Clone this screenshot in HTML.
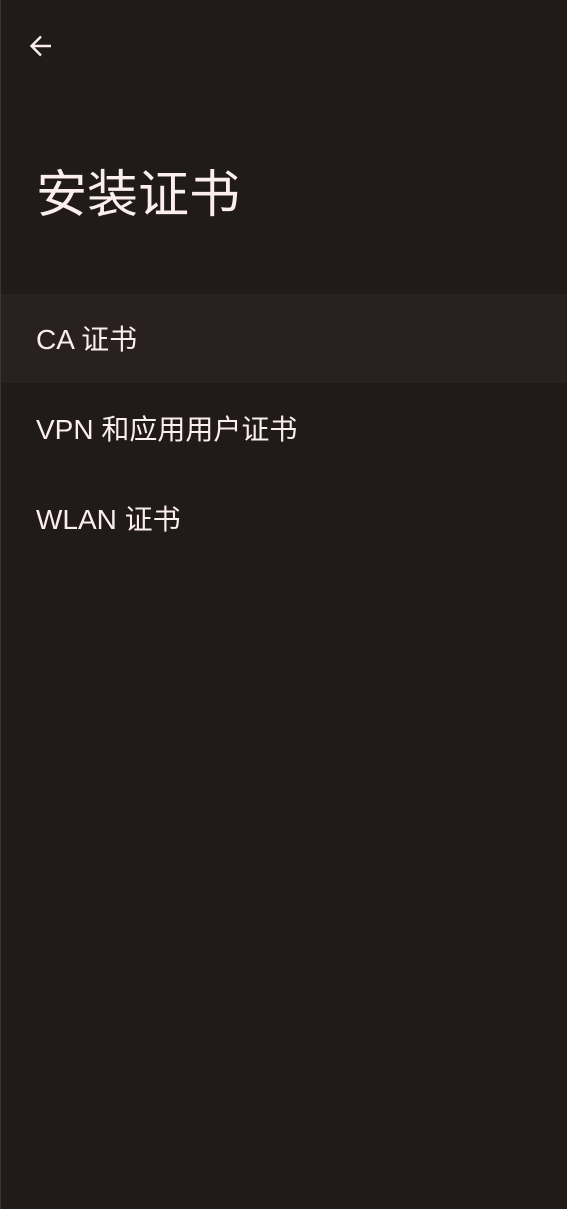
<!DOCTYPE html>
<html><head><meta charset="utf-8"><style>
html,body{margin:0;padding:0;}
body{width:567px;height:1209px;background:#201a19;position:relative;overflow:hidden;font-family:"Liberation Sans","Noto Sans CJK SC",sans-serif;color:#fbeeec;}
.edge{position:absolute;left:0;top:0;width:1px;height:1209px;background:#3a3634;}
.t{position:absolute;left:36px;white-space:nowrap;}
.hl{position:absolute;left:1px;right:0;top:294px;height:89px;background:#292120;}
.r{font-size:28px;line-height:36px;}
</style></head><body>
<div class="edge"></div>
<svg style="position:absolute;left:28px;top:33px" width="26" height="26" viewBox="0 0 26 26"><path d="M23 13H4M13 3.5L3.5 13L13 22.5" fill="none" stroke="#fbeeec" stroke-width="2.4"/></svg>
<div class="t" style="top:164px;font-size:51px;line-height:62px;">安装证书</div>
<div class="hl"></div>
<div class="t r" style="top:322px;">CA 证书</div>
<div class="t r" style="top:412px;">VPN 和应用用户证书</div>
<div class="t r" style="top:502px;">WLAN 证书</div>
</body></html>
